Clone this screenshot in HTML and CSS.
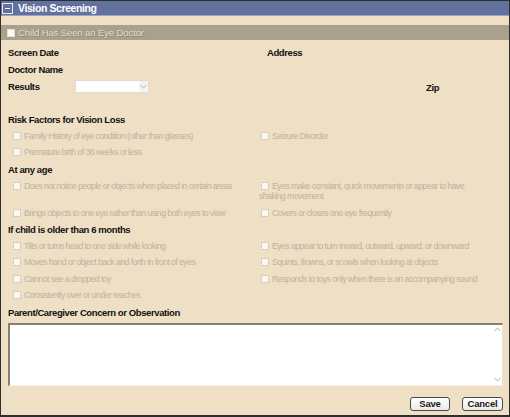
FILE: index.html
```html
<!DOCTYPE html>
<html>
<head>
<meta charset="utf-8">
<link rel="stylesheet" href="styles.css">
</head>
<body>
<div class="panel">
  <div class="hdr">
    <span class="toggle"><span class="minus"></span></span>
    <span class="title">Vision Screening</span>
  </div>
  <div class="spacer"></div>
  <div class="seen-bar">
    <span class="seen-cb"></span>
    <span class="seen-label">Child Has Seen an Eye Doctor</span>
  </div>
  <div class="content">
    <div class="fields">
      <div class="lbl">Screen Date</div>
      <div class="lbl">Address</div>
      <div class="lbl">Doctor Name</div>
      <div></div>
      <div class="results">
        <span class="lbl res-lbl">Results</span>
        <span class="select"><span class="arrow"><svg width="7" height="5" viewBox="0 0 7 5"><path d="M0.5 0.8 L3.5 3.8 L6.5 0.8" fill="none" stroke="#c9c9c9" stroke-width="1.2"/></svg></span></span>
      </div>
      <div class="lbl zip">Zip</div>
    </div>

    <div class="blank"></div>

    <div class="heading">Risk Factors for Vision Loss</div>
    <div class="checks">
      <div class="item"><span class="cb"></span>Family History of eye condition (other than glasses)</div>
      <div class="item"><span class="cb"></span>Seizure Disorder</div>
      <div class="item"><span class="cb"></span>Premature birth of 36 weeks or less</div>
      <div class="item"></div>
    </div>

    <div class="heading">At any age</div>
    <div class="checks">
      <div class="item"><span class="cb"></span>Does not notice people or objects when placed in certain areas</div>
      <div class="item"><span class="cb"></span>Eyes make constant, quick movements or appear to have shaking movement</div>
      <div class="item"><span class="cb"></span>Brings objects to one eye rather than using both eyes to view</div>
      <div class="item"><span class="cb"></span>Covers or closes one eye frequently</div>
    </div>

    <div class="heading">If child is older than 6 months</div>
    <div class="checks">
      <div class="item"><span class="cb"></span>Tilts or turns head to one side while looking</div>
      <div class="item"><span class="cb"></span>Eyes appear to turn inward, outward, upward, or downward</div>
      <div class="item"><span class="cb"></span>Moves hand or object back and forth in front of eyes</div>
      <div class="item"><span class="cb"></span>Squints, frowns, or scowls when looking at objects</div>
      <div class="item"><span class="cb"></span>Cannot see a dropped toy</div>
      <div class="item"><span class="cb"></span>Responds to toys only when there is an accompanying sound</div>
      <div class="item"><span class="cb"></span>Consistently over or under reaches</div>
      <div class="item"></div>
    </div>

    <div class="heading">Parent/Caregiver Concern or Observation</div>
    <div class="textarea">
      <div class="scroll">
        <svg width="7" height="5" viewBox="0 0 7 5"><path d="M0.5 4.2 L3.5 1.2 L6.5 4.2" fill="none" stroke="#c4c4c4" stroke-width="1.1"/></svg>
        <svg width="7" height="5" viewBox="0 0 7 5"><path d="M0.5 0.8 L3.5 3.8 L6.5 0.8" fill="none" stroke="#c4c4c4" stroke-width="1.1"/></svg>
      </div>
    </div>
    <div class="buttons">
      <span class="btn">Save</span>
      <span class="btn">Cancel</span>
    </div>
  </div>
</div>
</body>
</html>
```

FILE: styles.css
```css
html, body {
  margin: 0;
  padding: 0;
}
body {
  width: 510px;
  height: 417px;
  overflow: hidden;
  font-family: "Liberation Sans", Arial, sans-serif;
}
.panel {
  box-sizing: border-box;
  width: 510px;
  height: 417px;
  overflow: hidden;
  border: 1px solid #2e2e2e;
  border-bottom-width: 2px;
  background: #eedfc5;
  display: flex;
  flex-direction: column;
}
.panel > *, .content > * {
  flex-shrink: 0;
}
.hdr {
  height: 14px;
  background: #62729f;
  border-bottom: 1px solid #9aa3bf;
  display: flex;
  align-items: center;
}
.toggle {
  box-sizing: border-box;
  width: 11px;
  height: 11px;
  margin-left: 1px;
  border: 1px solid #e8ecf4;
  display: flex;
  align-items: center;
  justify-content: center;
}
.minus {
  width: 5px;
  height: 1px;
  background: #f4f6fa;
}
.title {
  margin-left: 5px;
  color: #ffffff;
  font-weight: bold;
  font-size: 10.5px;
  letter-spacing: -0.4px;
}
.spacer {
  height: 9px;
}
.seen-bar {
  height: 15px;
  background: #aaa18a;
  display: flex;
  align-items: center;
}
.seen-cb {
  box-sizing: border-box;
  width: 8px;
  height: 8px;
  margin-left: 6px;
  background: #fbfaf6;
  border: 1px solid #e4e0d6;
}
.seen-label {
  margin-left: 3px;
  font-size: 9.6px;
  letter-spacing: -0.15px;
  color: #e6e0d4;
  text-shadow: 0 0 1px #8a826d, 1px 1px 0 #938b76;
}
.content {
  padding: 0 0 0 7px;
  display: flex;
  flex-direction: column;
}
.lbl, .heading {
  font-weight: bold;
  font-size: 9.5px;
  letter-spacing: -0.4px;
  color: #111;
}
.fields {
  margin-top: 4px;
  display: grid;
  grid-template-columns: 259px 1fr;
  grid-auto-rows: 17px;
  align-items: center;
}
.results {
  display: flex;
  align-items: center;
}
.res-lbl {
  width: 67px;
}
.select {
  box-sizing: border-box;
  width: 74px;
  height: 13px;
  background: #fff;
  border: 1px solid #e2dccd;
  display: flex;
  justify-content: flex-end;
}
.arrow {
  width: 9px;
  background: #f3f3f1;
  display: flex;
  align-items: center;
  justify-content: center;
}
.zip {
  padding-left: 159px;
  padding-top: 2px;
}
.blank {
  height: 16px;
}
.heading {
  height: 17px;
  line-height: 17px;
}
.checks {
  display: grid;
  grid-template-columns: 248px 228px;
  padding-left: 3px;
}
.item {
  padding: 3px 0;
  min-height: 10.4px;
  line-height: 10.4px;
  font-size: 8.8px;
  letter-spacing: -0.6px;
  color: #bdb3a2;
}
.cb {
  display: inline-block;
  box-sizing: border-box;
  width: 8px;
  height: 8px;
  margin: 0 3px 0 2px;
  vertical-align: -1px;
  background: #fbf8f1;
  border: 1px solid #d9cfbd;
}
.textarea {
  box-sizing: border-box;
  margin-top: 2px;
  width: 495px;
  height: 63px;
  background: #fff;
  border-style: solid;
  border-width: 2px 1px 1px 2px;
  border-color: #85806f #e8e0d0 #f5eee2 #85806f;
  display: flex;
  justify-content: flex-end;
}
.scroll {
  width: 9px;
  display: flex;
  flex-direction: column;
  justify-content: space-between;
  align-items: center;
  padding: 2px 0 3px;
}
.buttons {
  margin-top: 11px;
  width: 495px;
  display: flex;
  justify-content: flex-end;
  gap: 12px;
}
.btn {
  box-sizing: border-box;
  height: 14px;
  border: 1px solid #4a4a4a;
  border-radius: 3px;
  background: linear-gradient(#ffffff, #ebebe6);
  font-weight: bold;
  font-size: 9.5px;
  letter-spacing: -0.2px;
  color: #1a1a1a;
  display: flex;
  align-items: center;
  justify-content: center;
}
.btn:first-child {
  width: 40px;
}
.btn:last-child {
  width: 41px;
}
```
